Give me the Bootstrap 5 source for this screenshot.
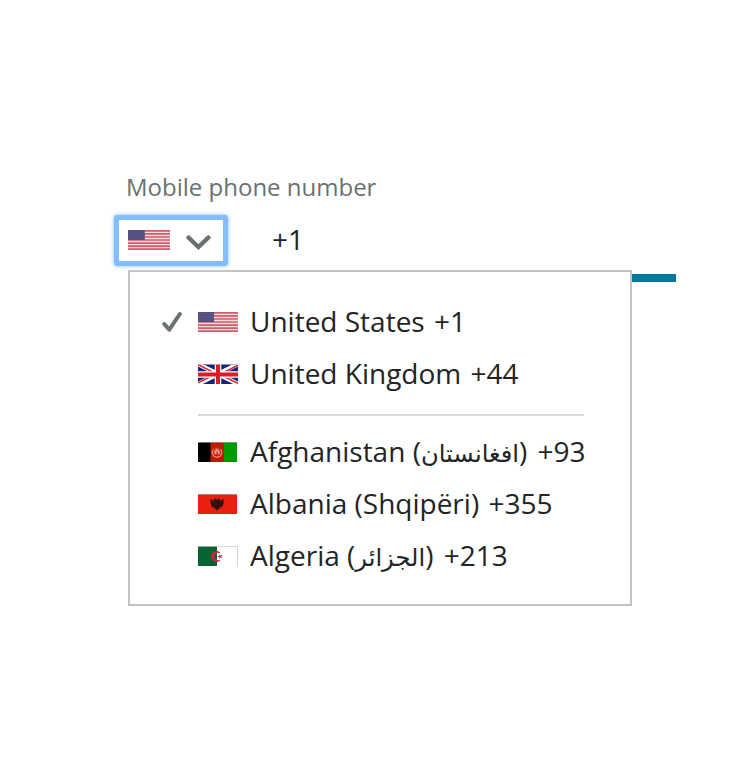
<!DOCTYPE html>
<html lang="en">
<head>
<meta charset="utf-8">
<meta name="viewport" content="width=device-width, initial-scale=1">
<title>Mobile phone number</title>
<link href="https://cdn.jsdelivr.net/npm/bootstrap@5.3.0/dist/css/bootstrap.min.css" rel="stylesheet">
<style>
body { font-family: "Open Sans", "DejaVu Sans", sans-serif; color: #222425; background: #fff; }
.phone-page { min-height: 764px; padding: 170px 0 0 128px; }
.phone-field { width: 548px; }
.phone-label { font-size: 24px; line-height: 34px; color: #6a7170; margin-left: -2px; }
.phone-line { height: 78px; border-bottom: 8px solid #047a9c; }
.country-btn { width: 104px; height: 41px; margin: 16px 0 0 -9px; padding: 0 0 1px 9px; background: #fff; border: 0; border-radius: 1px; box-shadow: 0 0 0 5px #84bdff, 0 0 4px 5px #84bdff; }
.country-btn svg { flex: none; }
.dial { font-size: 28px; line-height: 40px; margin: 15px 0 0 49px; }
.country-menu { top: 100px; left: 0; width: 504px; height: 336px; padding: 24px 0; background: #fff; border: 2px solid #c4c4c4; border-radius: 0; font-size: 28px; }
.country-item { height: 52px; padding: 0 0 0 32px; color: #222425; line-height: 50px; background: none; white-space: nowrap; }
.country-item > span:last-child { height: 52px; }
.country-item .code { margin-left: 2px; }
.country-item bdi { font-size: 24.2px; line-height: 1; }
.country-item bdi ~ .code { margin-left: 3px; }
.tick { width: 21px; height: 22px; margin-right: 15px; flex: none; }
.flag { width: 40px; height: 20px; margin-right: 12px; flex: none; }
.menu-rule { border-top: 2px solid #d9d9d9; margin: 14px 46px 10px 68px; opacity: 1; }
</style>
</head>
<body>
<svg width="0" height="0" class="position-absolute" aria-hidden="true">
  <symbol id="us" viewBox="0 0 40 20" preserveAspectRatio="none">
    <rect width="40" height="20" fill="#f3dfe1"/>
    <path d="M0 .8H40M0 3.9H40M0 7H40M0 10H40M0 13.1H40M0 16.2H40M0 19.2H40" stroke="#d25b68" stroke-width="1.7"/>
    <rect width="16" height="10" fill="#51507f"/>
    <path d="M1 2H16M1 5H16M1 8H16" stroke="#6a6994" stroke-width=".8" stroke-dasharray="1 1.5"/>
  </symbol>
  <symbol id="gb" viewBox="0 0 40 20" preserveAspectRatio="none">
    <rect width="40" height="20" fill="#14237c"/>
    <path d="M0 0L40 20M40 0L0 20" stroke="#fff" stroke-width="4.4"/>
    <path d="M0 .6L19 10.2M21 9.8L40 19.4M40 1.2L21 10.8M19 9.4L0 18.8" stroke="#d8202c" stroke-width="1.5"/>
    <path d="M20 0V20M0 10.5H40" stroke="#fff" stroke-width="6.6"/>
    <path d="M20 0V20M0 10.5H40" stroke="#dc1c24" stroke-width="4"/>
    <path d="M0 .4H40" stroke="#bbb" stroke-width=".8"/>
  </symbol>
  <symbol id="af" viewBox="0 0 40 20">
    <path d="M0 0H13V20H0z" fill="#000"/><path d="M12.5 0H26V20H12.5z" fill="#bd1b04"/><path d="M26 0H39V20H26z" fill="#009b00"/>
    <path d="M15.6 7.2Q12.8 11 16 14.2Q19 16.2 22 14.2Q25.2 11 22.4 7.2" fill="none" stroke="#e3836f" stroke-width="1.4"/>
    <path d="M16.7 8.7Q19 6.2 21.3 8.7V12H16.7zM17 6.3H21" fill="#e9a292" stroke="#e9a292" stroke-width=".6"/>
    <path d="M18.5 9.5H19.8V12H18.5z" fill="#bd1b04"/><path d="M0 .4H39" stroke="#999" stroke-width=".8"/>
  </symbol>
  <symbol id="al" viewBox="0 0 40 20">
    <rect width="39" height="20" fill="#e8200f"/>
    <path d="M19 6.3L17.5 4.6 15.6 5.2 16.8 7.2 12 5.1 12.7 8 12 9 13.3 10.2 12.7 11.4 14.3 12 14 13.3 16.5 13 15.8 15 17.6 14.6 19 17 20.4 14.6 22.2 15 21.5 13 24 13.3 23.7 12 25.3 11.4 24.7 10.2 26 9 25.3 8 26 5.1 21.2 7.2 22.4 5.2 20.5 4.6z" fill="#32100c"/>
    <path d="M0 .4H39" stroke="#aaa" stroke-width=".8"/>
  </symbol>
  <symbol id="dz" viewBox="0 0 40 20">
    <rect width="39" height="20" fill="#fff"/><rect width="19" height="20" fill="#066334"/>
    <path d="M22 6.8A5 5 0 1 0 22 14.2A4.2 4.2 0 1 1 22 6.8z" fill="#d92140" stroke="#d92140" stroke-width=".9"/>
    <path d="M19.3 10.5L21.3 9.8 21.3 7.9 22.5 9.4 24.4 8.8 23.3 10.5 24.4 12.2 22.5 11.6 21.3 13.1 21.3 11.2z" fill="#d92140"/>
    <path d="M0 .4H39.5V20" fill="none" stroke="#ccc" stroke-width=".8"/>
  </symbol>
</svg>
<main class="phone-page">
<div class="phone-field position-relative">
  <div class="phone-label">Mobile phone number</div>
  <div class="phone-line d-flex align-items-start">
    <button type="button" class="country-btn d-flex align-items-center" aria-label="Country" aria-expanded="true">
      <svg width="42" height="20"><use href="#us"/></svg>
      <svg class="ms-3 mt-1" width="26" height="18" viewBox="0 0 26 18"><path d="M2.5 4.5L12.4 14 22.4 4.5" fill="none" stroke="#6a7070" stroke-width="4.4" stroke-linecap="round"/></svg>
    </button>
    <span class="dial">+1</span>
  </div>
  <div class="country-menu dropdown-menu show">
    <a class="country-item dropdown-item d-flex align-items-center" href="#"><svg class="tick" viewBox="0 0 21 22"><path d="M2.3 13L7.3 18.7 17.8 3" fill="none" stroke="#6a7070" stroke-width="4" stroke-linecap="round" stroke-linejoin="round"/></svg><svg class="flag"><use href="#us"/></svg><span>United States <span class="code">+1</span></span></a>
    <a class="country-item dropdown-item d-flex align-items-center" href="#"><span class="tick"></span><svg class="flag"><use href="#gb"/></svg><span>United Kingdom <span class="code">+44</span></span></a>
    <hr class="menu-rule">
    <a class="country-item dropdown-item d-flex align-items-center" href="#"><span class="tick"></span><svg class="flag"><use href="#af"/></svg><span>Afghanistan (<bdi>افغانستان</bdi>) <span class="code">+93</span></span></a>
    <a class="country-item dropdown-item d-flex align-items-center" href="#"><span class="tick"></span><svg class="flag"><use href="#al"/></svg><span>Albania (Shqipëri) <span class="code">+355</span></span></a>
    <a class="country-item dropdown-item d-flex align-items-center" href="#"><span class="tick"></span><svg class="flag"><use href="#dz"/></svg><span>Algeria (<bdi>الجزائر</bdi>) <span class="code">+213</span></span></a>
  </div>
</div>
</main>
<script src="https://cdn.jsdelivr.net/npm/bootstrap@5.3.0/dist/js/bootstrap.bundle.min.js"></script>
</body>
</html>
